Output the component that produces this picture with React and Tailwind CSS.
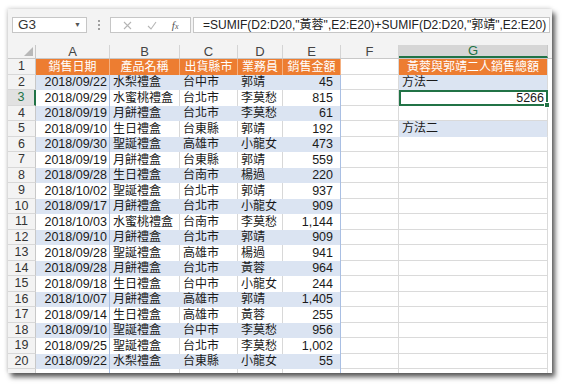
import React from 'react';

const rows = [
  ['2018/09/22', '水梨禮盒', '台中市', '郭靖', '45'],
  ['2018/09/29', '水蜜桃禮盒', '台北市', '李莫愁', '815'],
  ['2018/09/19', '月餅禮盒', '台北市', '李莫愁', '61'],
  ['2018/09/10', '生日禮盒', '台東縣', '郭靖', '192'],
  ['2018/09/30', '聖誕禮盒', '高雄市', '小龍女', '473'],
  ['2018/09/19', '月餅禮盒', '台東縣', '郭靖', '559'],
  ['2018/09/28', '生日禮盒', '台南市', '楊過', '220'],
  ['2018/10/02', '聖誕禮盒', '台北市', '郭靖', '937'],
  ['2018/09/17', '月餅禮盒', '台北市', '小龍女', '909'],
  ['2018/10/03', '水蜜桃禮盒', '台南市', '李莫愁', '1,144'],
  ['2018/09/10', '月餅禮盒', '台北市', '郭靖', '909'],
  ['2018/09/28', '聖誕禮盒', '高雄市', '楊過', '941'],
  ['2018/09/28', '月餅禮盒', '台北市', '黃蓉', '964'],
  ['2018/09/18', '生日禮盒', '台中市', '小龍女', '244'],
  ['2018/10/07', '月餅禮盒', '高雄市', '郭靖', '1,405'],
  ['2018/09/14', '生日禮盒', '高雄市', '黃蓉', '255'],
  ['2018/09/10', '聖誕禮盒', '台中市', '李莫愁', '956'],
  ['2018/09/25', '聖誕禮盒', '台北市', '李莫愁', '1,002'],
  ['2018/09/22', '水梨禮盒', '台東縣', '小龍女', '55'],
];

const font = "font-['Liberation_Sans','Noto_Sans_CJK_TC',sans-serif]";

const RowNum = ({ n, active }) => (
  <div
    className={`w-[28px] shrink-0 flex items-center justify-center text-[12.5px] border-b border-[#d8d8d8] ${
      active
        ? 'bg-[#e1e1e1] text-[#217346] border-r-2 border-r-[#217346]'
        : 'bg-[#f3f3f3] text-[#333] border-r border-r-[#c8c8c8]'
    }`}
  >
    {n}
  </div>
);

const App = () => {
  return (
    <div className={`w-[567px] h-[388px] bg-white pt-[9px] pl-[8px] ${font}`}>
      <div className="w-[544px] h-[364px] overflow-hidden flex flex-col bg-white shadow-[3px_4px_5px_rgba(0,0,0,0.65),-1px_-1px_4px_rgba(0,0,0,0.15)]">
        {/* Formula bar */}
        <div className="h-[36px] shrink-0 bg-[#f3f3f3] flex items-start pt-[8px] pl-[4px]">
          <div className="w-[75px] h-[16px] bg-white border border-[#c6c6c6] flex items-center justify-between px-[5px] text-[13.5px] text-[#333]">
            <span>G3</span>
            <span className="text-[7px] text-[#555]">▼</span>
          </div>
          <div className="w-[23px] h-[16px] flex flex-col items-center justify-center gap-[2px]">
            <span className="w-[2px] h-[2px] bg-[#a0a0a0]" />
            <span className="w-[2px] h-[2px] bg-[#a0a0a0]" />
            <span className="w-[2px] h-[2px] bg-[#a0a0a0]" />
          </div>
          <div className="w-[81px] h-[16px] bg-white border border-[#c6c6c6] flex items-center justify-around px-[4px]">
            <svg width="9" height="9" viewBox="0 0 9 9">
              <path d="M1 1L8 8M8 1L1 8" stroke="#b5b5b5" strokeWidth="1.1" fill="none" />
            </svg>
            <svg width="10" height="9" viewBox="0 0 10 9">
              <path d="M1 5L4 8L9 1" stroke="#b5b5b5" strokeWidth="1.1" fill="none" />
            </svg>
            <span className="text-[11px] italic text-[#555] font-['Liberation_Serif',serif] leading-none">
              f<span className="text-[8px]">x</span>
            </span>
          </div>
          <div className="ml-[2px] w-[357px] h-[16px] bg-white border border-[#c6c6c6] flex items-center pl-[9px] text-[12px] text-[#222] whitespace-nowrap overflow-hidden">
            =SUMIF(D2:D20,"黃蓉",E2:E20)+SUMIF(D2:D20,"郭靖",E2:E20)
          </div>
        </div>

        {/* Column headers */}
        <div className="h-[14px] shrink-0 flex text-[13px] text-[#444] bg-[#f3f3f3] border-b border-[#c8c8c8]">
          <div className="w-[28px] shrink-0 border-r border-[#c8c8c8] flex items-end justify-end p-[2px]">
            <div className="w-0 h-0 border-l-[9px] border-l-transparent border-b-[9px] border-b-[#b8b8b8]" />
          </div>
          {[
            ['A', 'w-[74px]'],
            ['B', 'w-[70px]'],
            ['C', 'w-[58px]'],
            ['D', 'w-[45px]'],
            ['E', 'w-[58px]'],
            ['F', 'w-[58px]'],
          ].map(([l, w]) => (
            <div key={l} className={`${w} shrink-0 border-r border-[#d4d4d4] flex items-center justify-center leading-none`}>
              {l}
            </div>
          ))}
          <div className="w-[149px] shrink-0 border-r border-[#c8c8c8] bg-[#d6d6d6] text-[#217346] flex items-center justify-center leading-none border-b-2 border-b-[#217346]">
            G
          </div>
          <div className="flex-1" />
        </div>

        {/* Row 1 */}
        <div className="h-[15.5px] shrink-0 flex text-[12px]">
          <RowNum n={1} />
          {[
            ['銷售日期', 'w-[74px]'],
            ['產品名稱', 'w-[70px]'],
            ['出貨縣市', 'w-[58px]'],
            ['業務員', 'w-[45px]'],
            ['銷售金額', 'w-[58px]'],
          ].map(([t, w]) => (
            <div key={t} className={`${w} shrink-0 bg-[#ed7d31] text-white border-r border-[#f4b183] flex items-center justify-center leading-none`}>
              {t}
            </div>
          ))}
          <div className="w-[58px] shrink-0 border-r border-b border-[#dadada]" />
          <div className="w-[149px] shrink-0 bg-[#ed7d31] text-white flex items-center justify-center leading-none border-r border-[#dadada]">
            黃蓉與郭靖二人銷售總額
          </div>
          <div className="flex-1" />
        </div>

        {/* Data rows */}
        {rows.map((r, i) => {
          const n = i + 2;
          const blue = n % 2 === 0;
          const bg = blue ? 'bg-[#dbe4f2]' : 'bg-white';
          const mid = blue ? 'border-[#dbe4f2]' : 'border-[#d8d8d8]';
          let g = null;
          if (n === 2) g = { text: '方法一', blue: true };
          if (n === 5) g = { text: '方法二', blue: true };
          return (
            <div key={n} className="h-[15.5px] shrink-0 flex text-[12.5px] text-[#1a1a1a] leading-none">
              <RowNum n={n} active={n === 3} />
              <div className={`w-[74px] shrink-0 ${bg} border-r border-[#a9bfe3] flex items-center justify-end pr-[2px]`}>
                {r[0]}
              </div>
              <div className={`w-[70px] shrink-0 ${bg} border-r ${mid} flex items-center pl-[3px] text-[12px]`}>
                {r[1]}
              </div>
              <div className={`w-[58px] shrink-0 ${bg} border-r ${mid} flex items-center pl-[3px] text-[12px]`}>
                {r[2]}
              </div>
              <div className={`w-[45px] shrink-0 ${bg} border-r ${mid} flex items-center pl-[3px] text-[12px]`}>
                {r[3]}
              </div>
              <div className={`w-[58px] shrink-0 ${bg} border-r border-[#a9bfe3] flex items-center justify-end pr-[7px]`}>
                {r[4]}
              </div>
              <div className="w-[58px] shrink-0 border-r border-b border-[#dadada]" />
              {n === 3 ? (
                <div className="w-[149px] shrink-0 relative border-2 border-[#217346] flex items-center justify-end pr-[2px]">
                  5266
                  <span className="absolute right-[-4px] bottom-[-4px] w-[6px] h-[6px] bg-[#217346] border border-white" />
                </div>
              ) : (
                <div
                  className={`w-[149px] shrink-0 border-r border-[#dadada] flex items-center pl-[3px] text-[12px] ${
                    g && g.blue ? 'bg-[#dbe4f2] border-b border-b-[#dbe4f2]' : 'border-b'
                  }`}
                >
                  {g ? g.text : ''}
                </div>
              )}
              <div className="flex-1" />
            </div>
          );
        })}

        {/* Partial row 21 */}
        <div className="h-[10px] shrink-0 flex">
          <RowNum n="" />
          <div className="w-[74px] shrink-0 border-r border-[#a9bfe3]" />
          <div className="w-[70px] shrink-0 border-r border-[#d8d8d8]" />
          <div className="w-[58px] shrink-0 border-r border-[#d8d8d8]" />
          <div className="w-[45px] shrink-0 border-r border-[#d8d8d8]" />
          <div className="w-[58px] shrink-0 border-r border-[#a9bfe3]" />
          <div className="w-[58px] shrink-0 border-r border-[#dadada]" />
          <div className="w-[149px] shrink-0 border-r border-[#dadada]" />
        </div>
      </div>
    </div>
  );
};

export default App;
